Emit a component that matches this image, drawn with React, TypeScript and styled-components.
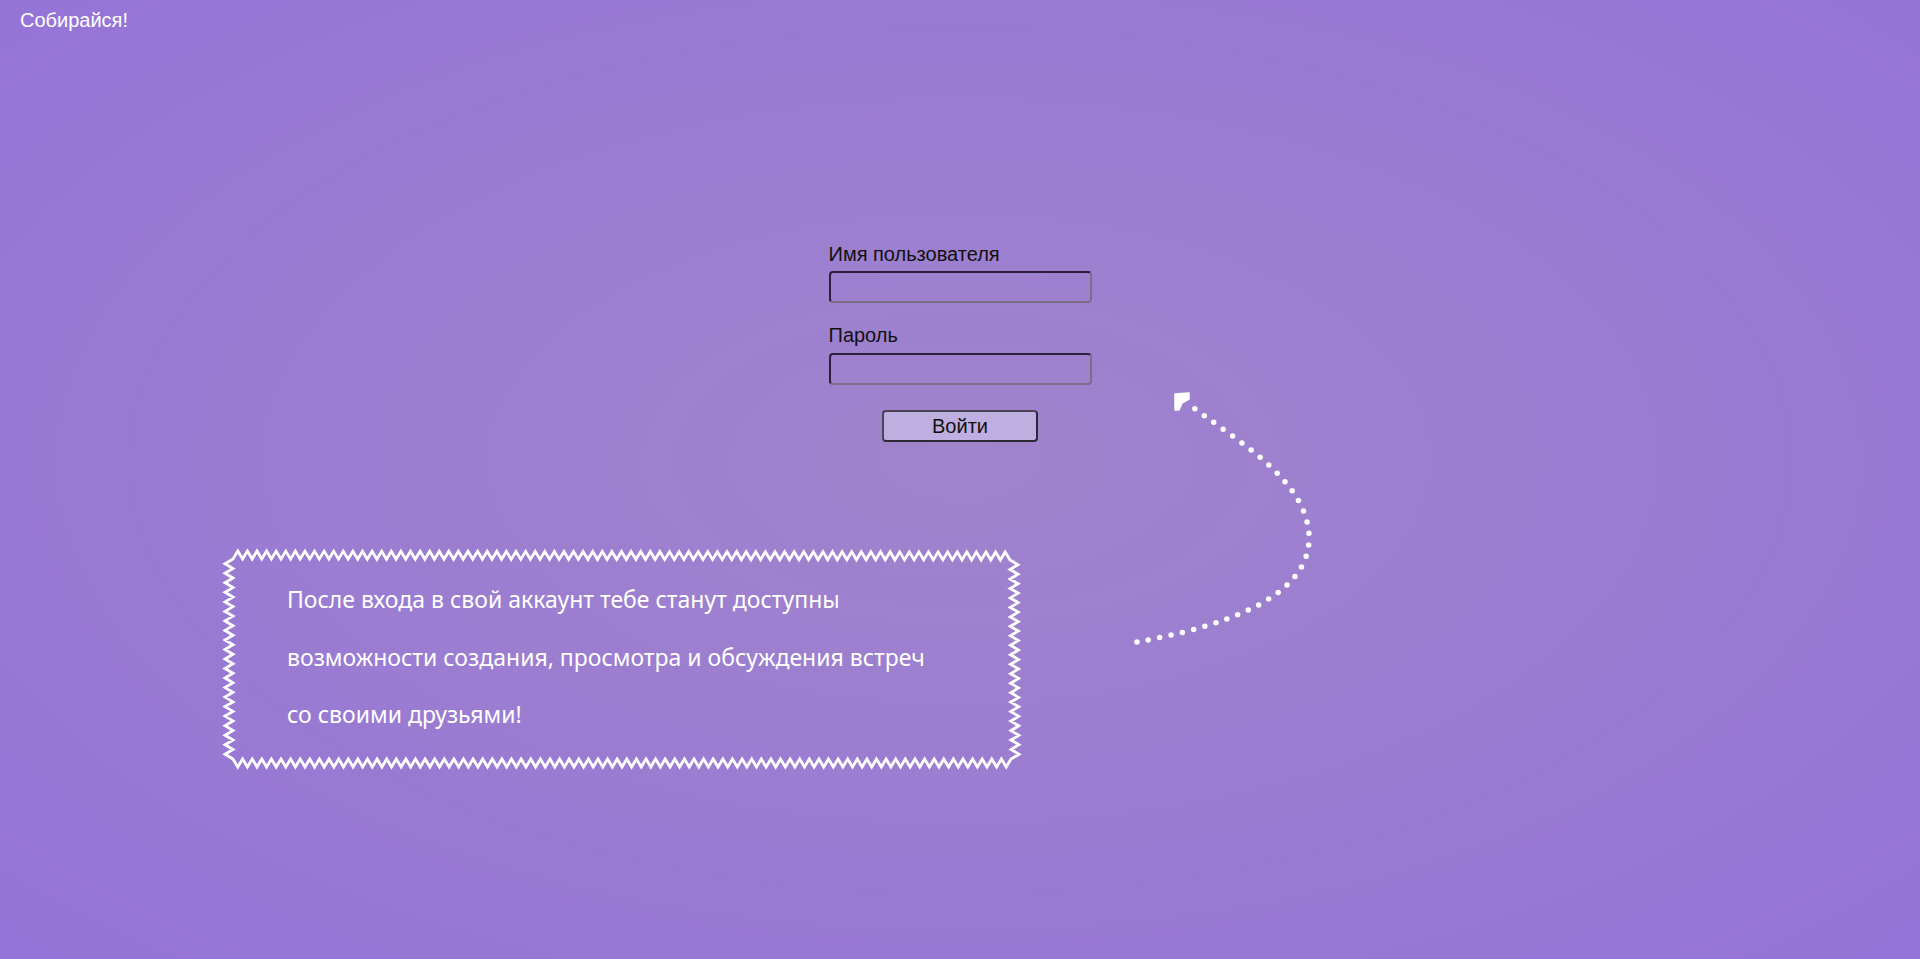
import React from "react";
import styled, { createGlobalStyle } from "styled-components";

const GlobalStyle = createGlobalStyle`
  html, body { margin: 0; padding: 0; }
  body { font-family: "Liberation Sans", Arial, sans-serif; }
  * { box-sizing: border-box; }
`;

const Page = styled.div`
  position: relative;
  min-height: 959px;
  overflow: hidden;
  background: radial-gradient(ellipse at 50% 48%, #a084cc 0%, #9b7dd1 45%, #9473d8 100%);
  display: flex;
  flex-direction: column;
`;

const Header = styled.header`
  padding: 9px 20px 0;
  font-size: 20px;
  line-height: 23px;
  color: #ffffff;
`;

const Form = styled.form`
  align-self: center;
  width: 263px;
  margin-top: 211px;
  display: flex;
  flex-direction: column;
`;

const Label = styled.label<{ $gap: number }>`
  display: block;
  font-size: 20px;
  line-height: 23px;
  color: #111;
  margin-bottom: ${(p) => p.$gap}px;
`;

const Input = styled.input<{ $after: number }>`
  display: block;
  width: 263px;
  height: 32px;
  margin: 0 0 ${(p) => p.$after}px;
  background: transparent;
  border-width: 2px;
  border-style: solid;
  border-color: #2a1f3c #7a6f86 #7a6f86 #2a1f3c;
  border-radius: 4px;
  outline: none;
  font-size: 16px;
`;

const Button = styled.button`
  align-self: center;
  width: 156px;
  height: 32px;
  background: #bfaee0;
  border: 2px solid #4a4454;
  border-bottom-color: #2c2833;
  border-right-color: #2c2833;
  border-radius: 4px;
  font-family: "Liberation Sans", Arial, sans-serif;
  font-size: 20px;
  color: #111;
  padding: 0;
  line-height: 26px;
`;

const Bottom = styled.section`
  display: flex;
  margin-top: 105px;
  padding-left: 224px;
`;

const NoteBox = styled.div`
  position: relative;
  width: 798px;
  height: 223px;
  padding: 24px 0 0 63px;
`;

const NoteFrame = styled.svg`
  position: absolute;
  inset: 0;
  width: 100%;
  height: 100%;
  overflow: visible;
`;

const NoteLine = styled.p`
  margin: 0;
  font-family: "Noto Sans", "Open Sans", sans-serif;
  font-size: 23px;
  line-height: 57.5px;
  color: #ffffff;
  white-space: nowrap;
`;

const Arrow = styled.svg`
  position: absolute;
  left: 1120px;
  top: 385px;
  width: 210px;
  height: 270px;
  overflow: visible;
`;

function zig(x0: number, y0: number, x1: number, y1: number, amp: number, period: number): string {
  const dx = x1 - x0;
  const dy = y1 - y0;
  const len = Math.hypot(dx, dy);
  const n = Math.max(2, 2 * Math.round(len / period));
  const ux = dx / len;
  const uy = dy / len;
  // outward normal for a clockwise path
  const nx = uy;
  const ny = -ux;
  const pts: string[] = [];
  for (let i = 1; i <= n; i++) {
    const t = i / n;
    const off = i % 2 === 1 ? amp : 0;
    const px = x0 + dx * t + nx * off;
    const py = y0 + dy * t + ny * off;
    pts.push(`L${px.toFixed(1)},${py.toFixed(1)}`);
  }
  return pts.join(" ");
}

function framePath(w: number, h: number): string {
  const amp = 8;
  const per = 9.6;
  const tl = [9, 12];
  const tr = [w - 12, 13];
  const br = [w - 11, h - 11];
  const bl = [9, h - 11];
  let d = `M${tl[0]},${tl[1]} `;
  d += zig(tl[0], tl[1], tr[0], tr[1], amp, per) + " ";
  d += zig(tr[0], tr[1], br[0], br[1], amp, per) + " ";
  d += zig(br[0], br[1], bl[0], bl[1], amp, per) + " ";
  d += zig(bl[0], bl[1], tl[0], tl[1], amp, per) + " Z";
  return d;
}

export default function App() {
  const W = 798;
  const H = 223;
  return (
    <>
      <GlobalStyle />
      <Page>
        <Header>Собирайся!</Header>
        <Form onSubmit={(e) => e.preventDefault()}>
          <Label htmlFor="username" $gap={5}>Имя пользователя</Label>
          <Input id="username" type="text" $after={21} />
          <Label htmlFor="password" $gap={6}>Пароль</Label>
          <Input id="password" type="password" $after={25} />
          <Button type="submit">Войти</Button>
        </Form>
        <Bottom>
          <NoteBox>
            <NoteFrame viewBox={`0 0 ${W} ${H}`} preserveAspectRatio="none">
              <path d={framePath(W, H)} fill="none" stroke="#ffffff" strokeWidth={2.8} strokeLinejoin="miter" />
            </NoteFrame>
            <NoteLine>После входа в свой аккаунт тебе станут доступны</NoteLine>
            <NoteLine>возможности создания, просмотра и обсуждения встреч</NoteLine>
            <NoteLine>со своими друзьями!</NoteLine>
          </NoteBox>
        </Bottom>
        <Arrow viewBox="1120 385 210 270">
          <path
            d="M1137,642 C1215,628 1312,600 1309,535 C1306,478 1235,440 1186,402"
            fill="none"
            stroke="#ffffff"
            strokeWidth={5.5}
            strokeLinecap="round"
            strokeDasharray="0 11.6"
          />
          <path d="M1175,394 L1189,393 L1189,399 L1182,403 L1179,410 L1175,410 Z" fill="#ffffff" stroke="#ffffff" strokeWidth={1.5} strokeLinejoin="round" />
        </Arrow>
      </Page>
    </>
  );
}
